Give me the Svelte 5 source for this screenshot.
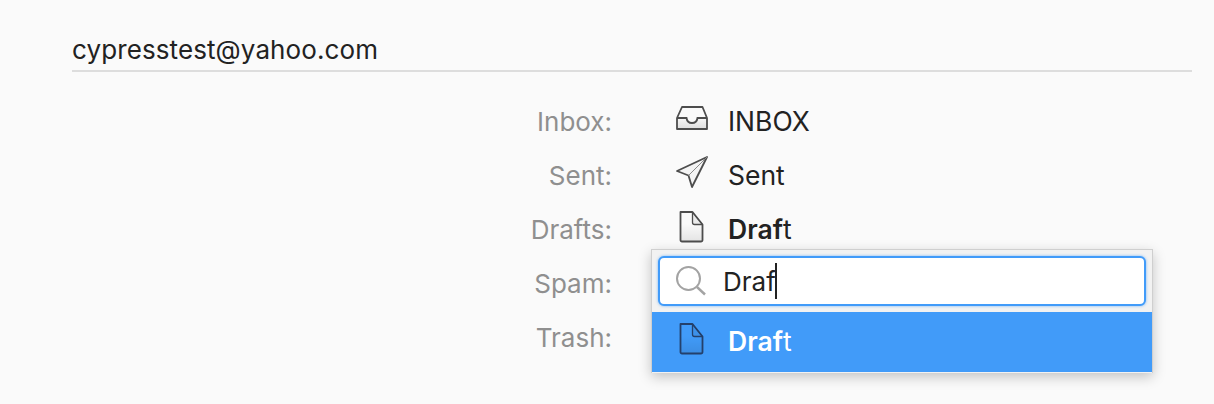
<script>
  const rows = [
    { label: 'Inbox:', icon: 'inbox', name: 'INBOX' },
    { label: 'Sent:', icon: 'sent', name: 'Sent' },
    { label: 'Drafts:', icon: 'file', bold: 'Draf', rest: 't' },
    { label: 'Spam:' },
    { label: 'Trash:' }
  ];
</script>

{#snippet fileIcon(stroke, id)}
  <svg class="icon" width="32" height="32" viewBox="0 0 32 32">
    <defs>
      <linearGradient {id} x1="0" y1="0" x2="0" y2="1">
        <stop offset="0.4" stop-color="#000" stop-opacity="0" />
        <stop offset="1" stop-color="#000" stop-opacity="0.09" />
      </linearGradient>
    </defs>
    <path d="M4.500 -1h12l10 12.500v15.500a1.500 1.500 0 0 1-1.500 1.500H6a1.500 1.500 0 0 1-1.500-1.500z" fill="url(#{id})" stroke={stroke} stroke-width="1.800" stroke-linejoin="round" />
    <path d="M16.500 -1v10.500a2 2 0 0 0 2 2h8" fill="#0000000f" stroke={stroke} stroke-width="1.300" />
  </svg>
{/snippet}

<main>
  <h1>cypresstest@yahoo.com</h1>
  <div class="rows">
    {#each rows as row}
      <div class="row">
        <span class="label">{row.label}</span>
        {#if row.icon === 'inbox'}
          <svg class="icon" width="32" height="32" viewBox="0 0 32 32">
            <defs>
              <linearGradient id="tray" x1="0" y1="0" x2="0" y2="1">
                <stop offset="0" stop-color="#f7f7f7" />
                <stop offset="1" stop-color="#dedede" />
              </linearGradient>
            </defs>
            <path d="M1 13h9.500c.5 3.500 3 5 5.500 5s5-1.500 5.500-5H31v11H1z" fill="url(#tray)" />
            <path d="M1 13 6 2h20.500L31 13v11H1z" fill="none" stroke="#4d4d4d" stroke-width="1.800" stroke-linejoin="round" />
            <path d="M1 13h9.500c.5 3.500 3 5 5.500 5s5-1.500 5.500-5H31" fill="none" stroke="#4d4d4d" stroke-width="1.800" />
          </svg>
        {:else if row.icon === 'sent'}
          <svg class="icon" width="32" height="32" viewBox="0 0 32 32">
            <path d="M1 12 31 -2 16 28l-3.500-11.500z" fill="#f4f4f4" stroke="#4d4d4d" stroke-width="1.800" stroke-linejoin="round" />
            <path d="M12.500 16.500 31 -2" fill="none" stroke="#8a8a8a" stroke-width="1" />
          </svg>
        {:else if row.icon === 'file'}
          {@render fileIcon('#4d4d4d', 'file-grey')}
        {/if}
        {#if row.name}
          <span class="name">{row.name}</span>
        {:else if row.bold}
          <span class="name"><b>{row.bold}</b>{row.rest}</span>
        {/if}
        {#if row.icon === 'file'}
          <div class="menu">
            <div class="search">
              <svg width="32" height="32" viewBox="0 0 32 32">
                <circle cx="13.500" cy="13.500" r="11.500" fill="none" stroke="#a3a3a3" stroke-width="2" />
                <path d="M22 22l8 7.500" fill="none" stroke="#a3a3a3" stroke-width="2.400" />
              </svg>
              <span class="query">Draf</span><span class="caret"></span>
            </div>
            <div class="option">
              {@render fileIcon('#24406b', 'file-blue')}
              <span class="name"><b>Draf</b>t</span>
            </div>
          </div>
        {/if}
      </div>
    {/each}
  </div>
</main>

<style>
  :global(body) {
    background: #fafafa;
  }

  main {
    box-sizing: border-box;
    height: 404px;
    padding: 0 22px 0 72px;
    font-family: Inter, "Liberation Sans", sans-serif;
    color: #222;
    overflow: hidden;
  }

  h1 {
    margin: 0;
    padding-top: 33px;
    height: 37px;
    border-bottom: 2px solid #dddddd;
    font-size: 26px;
    line-height: 34px;
    font-weight: 400;
    letter-spacing: 0.1px;
  }

  .rows {
    padding-top: 22px;
  }

  .row {
    position: relative;
    display: flex;
    align-items: center;
    height: 54px;
  }

  .label {
    width: 540px;
    text-align: right;
    font-size: 26px;
    color: #8f8f8f;
  }

  .icon {
    flex: none;
    margin-left: 64px;
    overflow: visible;
  }

  .name {
    margin-left: 20px;
    font-size: 26.500px;
  }

  b {
    font-weight: 600;
  }

  .menu {
    position: absolute;
    top: 47px;
    left: 579px;
    z-index: 2;
    box-sizing: border-box;
    width: 502px;
    height: 124px;
    background: #f2f2f2;
    border: 1px solid #cfcfcf;
    border-bottom: 0;
    box-shadow: 0 4px 12px rgba(0, 0, 0, 0.22);
  }

  .search {
    box-sizing: border-box;
    display: flex;
    align-items: center;
    height: 50px;
    margin: 6px;
    padding-left: 15px;
    background: #fff;
    border: 2px solid #419bf9;
    border-radius: 6px;
    box-shadow: 0 0 3px rgba(65, 155, 249, 0.7);
  }

  .query {
    margin-left: 16px;
    font-size: 26px;
  }

  .caret {
    width: 2px;
    height: 36px;
    margin-left: -1px;
    background: #222;
  }

  .option {
    box-sizing: border-box;
    display: flex;
    align-items: center;
    height: 60px;
    padding-bottom: 2px;
    background: #419bf9;
    color: #fff;
  }

  .option .icon {
    margin-left: 24px;
  }
</style>
